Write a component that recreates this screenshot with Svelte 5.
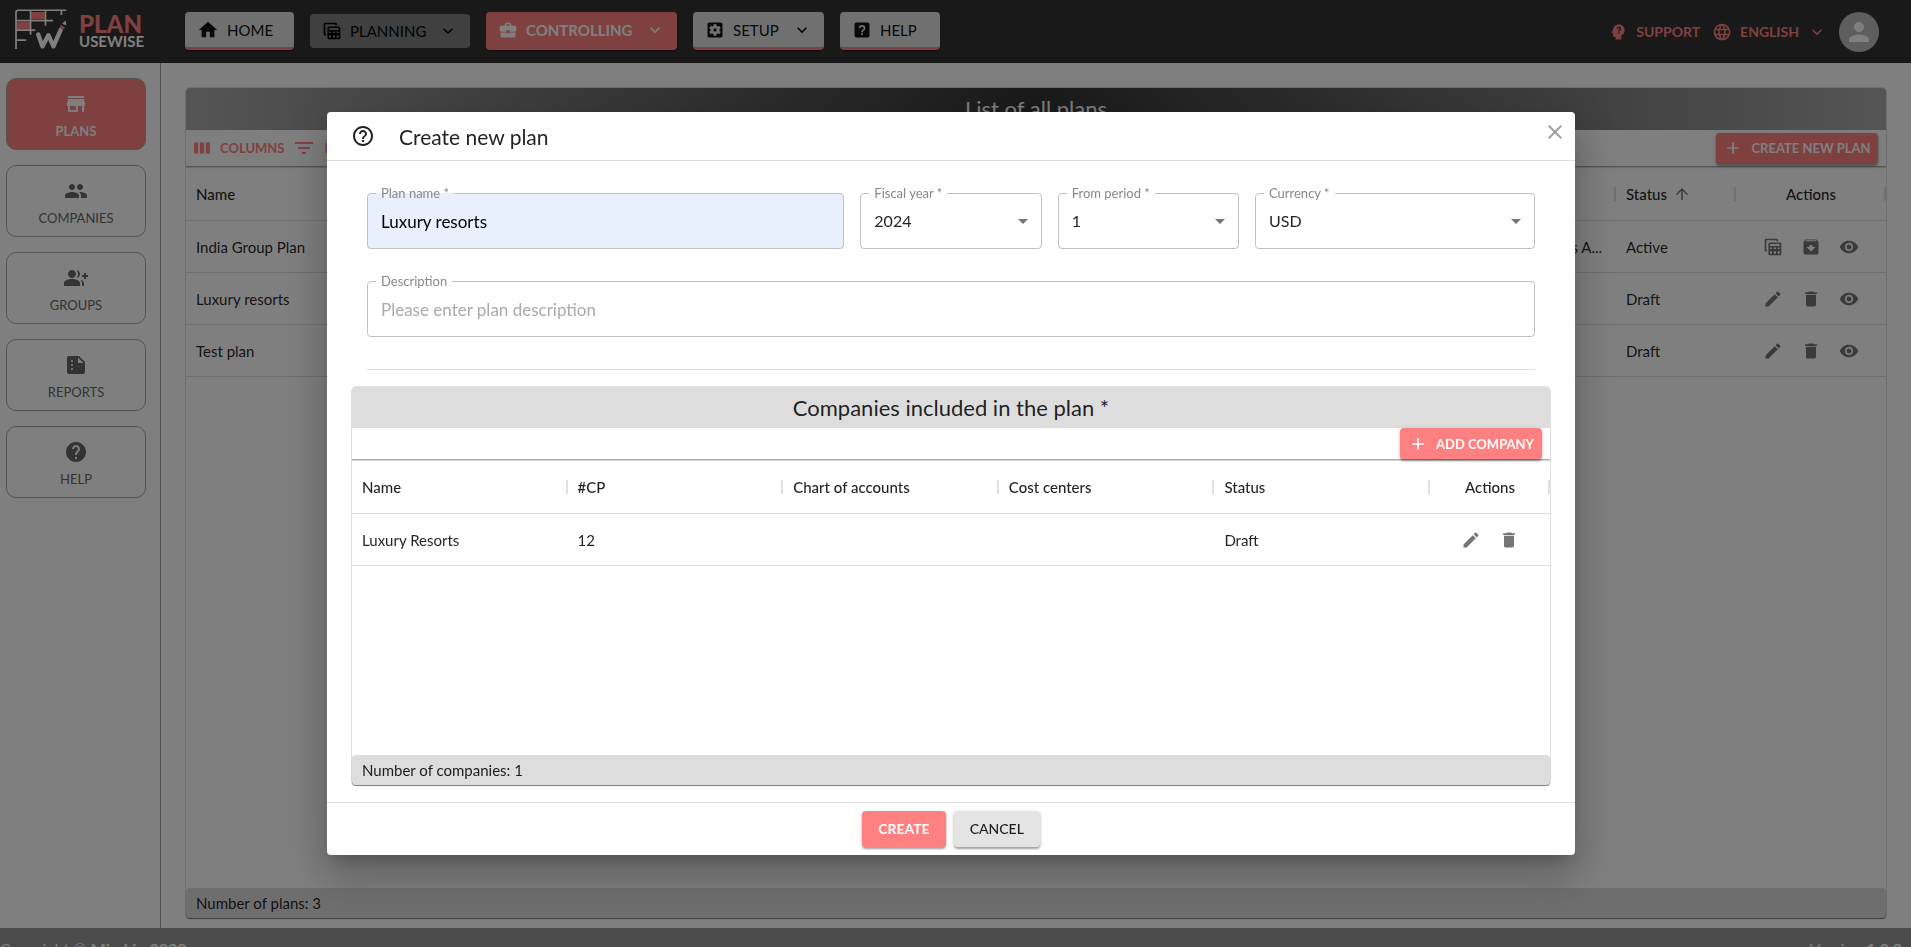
<script>
  const icons = {
    home: 'M10 20v-6h4v6h5v-8h3L12 3 2 12h3v8z',
    chevron: 'M7.41 8.58 12 13.17l4.59-4.59L18 10l-6 6-6-6z',
    tables: 'M2 3.5C2 2.7 2.7 2 3.500 2H16.500c.8 0 1.500.7 1.500 1.500V5h-2V4H4v11.500h1v2H3.500C2.700 17.500 2 16.800 2 16zM8 6.500h12.500c.8 0 1.500.7 1.500 1.500v12.500c0 .8-.7 1.500-1.500 1.500H8c-.8 0-1.500-.7-1.500-1.500V8c0-.8.7-1.500 1.500-1.500zM8.500 8.500v2.200H20V8.500zM8.500 12.500v2h2.300v-2zM13 12.500v2h2.500v-2zM17.700 12.500v2H20v-2zM8.500 17v3h2.300v-3zM13 17v3h2.500v-3zM17.700 17v3H20v-3z',
    briefcase: 'M10 16v-1H3.010L3 19c0 1.110.89 2 2 2h14c1.110 0 2-.89 2-2v-4h-7v1h-4zm10-9h-4.010V5l-2-2h-4l-2 2v2H4c-1.100 0-2 .9-2 2v3c0 1.110.89 2 2 2h6v-2h4v2h6c1.100 0 2-.9 2-2V9c0-1.100-.9-2-2-2zm-6 0h-4V5h4v2z',
    settings: 'M12 10c-1.100 0-2 .9-2 2s.9 2 2 2 2-.9 2-2-.9-2-2-2zm7-7H5c-1.110 0-2 .9-2 2v14c0 1.100.89 2 2 2h14c1.110 0 2-.9 2-2V5c0-1.100-.89-2-2-2zm-1.750 9c0 .23-.02.46-.05.68l1.480 1.160c.13.11.17.3.08.45l-1.400 2.420c-.09.15-.27.21-.43.15l-1.740-.7c-.36.28-.76.51-1.180.69l-.26 1.850c-.03.17-.18.3-.35.3h-2.800c-.17 0-.32-.13-.35-.29l-.26-1.850c-.43-.18-.82-.41-1.180-.69l-1.740.7c-.16.06-.34 0-.43-.15l-1.400-2.420c-.09-.15-.05-.34.08-.45l1.480-1.160c-.03-.23-.05-.46-.05-.69 0-.23.02-.46.05-.68l-1.480-1.160c-.13-.11-.17-.3-.08-.45l1.400-2.420c.09-.15.27-.21.43-.15l1.740.7c.36-.28.76-.51 1.180-.69l.26-1.850c.03-.17.18-.3.35-.3h2.800c.17 0 .32.13.35.29l.26 1.850c.43.18.82.41 1.180.69l1.740-.7c.16-.06.34 0 .43.15l1.400 2.420c.09.15.05.34-.08.45l-1.480 1.160c.03.23.05.46.05.69z',
    helpBox: 'M11 18h2v-2h-2zM12 6a4 4 0 0 0-4 4h2a2 2 0 0 1 4 0c0 2-3 1.750-3 5h2c0-2.250 3-2.500 3-5a4 4 0 0 0-4-4M5 3h14a2 2 0 0 1 2 2v14a2 2 0 0 1-2 2H5a2 2 0 0 1-2-2V5a2 2 0 0 1 2-2z',
    store: 'M20 4H4v2h16V4zm1 10v-2l-1-5H4l-1 5v2h1v6h10v-6h4v6h2v-6h1zm-9 4H6v-4h6v4z',
    people: 'M16 11c1.660 0 2.990-1.340 2.990-3S17.660 5 16 5c-1.660 0-3 1.340-3 3s1.340 3 3 3zm-8 0c1.660 0 2.990-1.340 2.990-3S9.660 5 8 5C6.340 5 5 6.340 5 8s1.340 3 3 3zm0 2c-2.330 0-7 1.170-7 3.500V19h14v-2.500c0-2.330-4.670-3.500-7-3.500zm8 0c-.29 0-.62.02-.97.05 1.160.84 1.970 1.970 1.970 3.450V19h6v-2.500c0-2.330-4.670-3.500-7-3.500z',
    groupAdd: 'M22 9V7h-2v2h-2v2h2v2h2v-2h2V9zM8 12c2.210 0 4-1.790 4-4s-1.790-4-4-4-4 1.790-4 4 1.790 4 4 4zm0 1c-2.670 0-8 1.340-8 4v3h16v-3c0-2.660-5.330-4-8-4zM12.510 4.050C13.430 5.110 14 6.490 14 8s-.57 2.890-1.490 3.950C14.470 11.700 16 10.040 16 8s-1.530-3.700-3.490-3.950zM16.530 13.830C17.420 14.660 18 15.700 18 17v3h2v-3c0-1.450-1.590-2.510-3.470-3.170z',
    report: 'M15 3H5c-1.100 0-2 .9-2 2v14c0 1.100.9 2 2 2h14c1.100 0 2-.9 2-2V9zM8 17a1 1 0 0 1 0-2 1 1 0 0 1 0 2zm0-4a1 1 0 0 1 0-2 1 1 0 0 1 0 2zm0-4a1 1 0 0 1 0-2 1 1 0 0 1 0 2zm6 1V4.500l5.500 5.500z',
    help: 'M12 2C6.480 2 2 6.480 2 12s4.480 10 10 10 10-4.480 10-10S17.520 2 12 2zm1 17h-2v-2h2v2zm2.070-7.750l-.9.92C13.450 12.900 13 13.500 13 15h-2v-.5c0-1.100.45-2.100 1.170-2.830l1.240-1.260c.37-.36.59-.86.59-1.410 0-1.100-.9-2-2-2s-2 .9-2 2H8c0-2.210 1.790-4 4-4s4 1.790 4 4c0 .88-.36 1.680-.93 2.250z',
    helpOutline: 'M11 18h2v-2h-2v2zm1-16C6.480 2 2 6.480 2 12s4.480 10 10 10 10-4.480 10-10S17.520 2 12 2zm0 18c-4.410 0-8-3.590-8-8s3.590-8 8-8 8 3.590 8 8-3.590 8-8 8zm0-14c-2.210 0-4 1.790-4 4h2c0-1.100.9-2 2-2s2 .9 2 2c0 2-3 1.750-3 5h2c0-2.250 3-2.500 3-5 0-2.210-1.790-4-4-4z',
    head: 'M13 3C9.230 3 6.190 5.950 6 9.660l-1.920 2.530c-.24.31 0 .81.42.81H6v3c0 1.110.89 2 2 2h1v3h7v-4.690c2.370-1.120 4-3.510 4-6.310 0-3.860-3.120-7-7-7zm.8 11h-1.600v-1.600h1.600zm0-2.600h-1.600c0-2.400 1.700-2.300 1.700-3.500 0-1.200-1.800-1.200-1.900.1h-1.600c.2-3.200 5.200-3.100 5.200 0 0 1.700-1.800 1.800-1.800 3.400z',
    globe: 'M11.990 2C6.470 2 2 6.480 2 12s4.470 10 9.990 10C17.520 22 22 17.520 22 12S17.520 2 11.990 2zm6.930 6h-2.950c-.32-1.250-.78-2.450-1.380-3.560 1.840.63 3.370 1.910 4.330 3.560zM12 4.040c.83 1.200 1.480 2.530 1.910 3.960h-3.820c.43-1.430 1.080-2.760 1.910-3.960zM4.260 14C4.100 13.360 4 12.690 4 12s.1-1.360.26-2h3.380c-.08.66-.14 1.320-.14 2s.06 1.340.14 2H4.260zm.82 2h2.950c.32 1.250.78 2.450 1.380 3.560-1.840-.63-3.370-1.900-4.330-3.560zm2.950-8H5.080c.96-1.660 2.490-2.930 4.330-3.560C8.810 5.550 8.350 6.750 8.030 8zM12 19.960c-.83-1.200-1.480-2.530-1.910-3.960h3.820c-.43 1.430-1.080 2.760-1.910 3.960zM14.340 14H9.660c-.09-.66-.16-1.320-.16-2s.07-1.350.16-2h4.680c.09.65.16 1.320.16 2s-.07 1.340-.16 2zm.25 5.560c.6-1.110 1.060-2.310 1.380-3.560h2.950c-.96 1.650-2.490 2.930-4.330 3.560zM16.360 14c.08-.66.14-1.320.14-2s-.06-1.340-.14-2h3.380c.16.64.26 1.310.26 2s-.1 1.360-.26 2h-3.380z',
    person: 'M12 12c2.210 0 4-1.790 4-4s-1.790-4-4-4-4 1.790-4 4 1.790 4 4 4zm0 2c-2.670 0-8 1.340-8 4v2h16v-2c0-2.660-5.330-4-8-4z',
    columns: 'M2.500 5.500h5v13h-5zM9.500 5.500h5v13h-5zM16.500 5.500h5v13h-5z',
    filter: 'M10 18h4v-2h-4v2zM3 6v2h18V6H3zm3 7h12v-2H6v2z',
    plus: 'M19 13h-6v6h-2v-6H5v-2h6V5h2v6h6v2z',
    arrowUp: 'm4 12 1.410 1.410L11 7.830V20h2V7.830l5.580 5.590L20 12l-8-8-8 8z',
    edit: 'M3 17.250V21h3.750L17.810 9.940l-3.750-3.750L3 17.250zM20.710 7.040c.39-.39.39-1.020 0-1.410l-2.340-2.340c-.39-.39-1.020-.39-1.410 0l-1.830 1.830 3.750 3.750 1.830-1.830z',
    trash: 'M6 19c0 1.100.9 2 2 2h8c1.100 0 2-.9 2-2V7H6v12zM19 4h-3.500l-1-1h-5l-1 1H5v2h14V4z',
    eye: 'M12 4.500C7 4.500 2.730 7.610 1 12c1.730 4.390 6 7.500 11 7.500s9.270-3.110 11-7.500c-1.730-4.390-6-7.500-11-7.500zM12 17c-2.760 0-5-2.240-5-5s2.240-5 5-5 5 2.240 5 5-2.240 5-5 5zm0-8c-1.660 0-3 1.340-3 3s1.340 3 3 3 3-1.340 3-3-1.340-3-3-3z',
    archive: 'M20.540 5.230l-1.390-1.680C18.880 3.210 18.470 3 18 3H6c-.47 0-.88.21-1.160.55L3.460 5.230C3.170 5.570 3 6.020 3 6.500V19c0 1.100.9 2 2 2h14c1.100 0 2-.9 2-2V6.500c0-.48-.17-.93-.46-1.270zM12 17.500L6.500 12H10v-2h4v2h3.500L12 17.500zM5.120 5l.81-1h12l.94 1H5.120z',
    close: 'M19 6.410 17.590 5 12 10.590 6.410 5 5 6.410 10.590 12 5 17.590 6.410 19 12 13.410 17.590 19 19 17.590 13.410 12z',
    caret: 'M7 10l5 5 5-5z'
  };

  const nav = [
    { label: 'HOME', icon: 'home', kind: 'light', width: 109 },
    { label: 'PLANNING', icon: 'tables', kind: 'muted', width: 160, menu: true },
    { label: 'CONTROLLING', icon: 'briefcase', kind: 'pink', width: 191, menu: true },
    { label: 'SETUP', icon: 'settings', kind: 'light', width: 131, menu: true },
    { label: 'HELP', icon: 'helpBox', kind: 'light', width: 100 }
  ];

  const side = [
    { label: 'PLANS', icon: 'store', active: true },
    { label: 'COMPANIES', icon: 'people' },
    { label: 'GROUPS', icon: 'groupAdd' },
    { label: 'REPORTS', icon: 'report' },
    { label: 'HELP', icon: 'help' }
  ];

  const plans = [
    { name: 'India Group Plan', more: 's A...', status: 'Active', actions: ['tables', 'archive', 'eye'] },
    { name: 'Luxury resorts', more: '', status: 'Draft', actions: ['edit', 'trash', 'eye'] },
    { name: 'Test plan', more: '', status: 'Draft', actions: ['edit', 'trash', 'eye'] }
  ];

  const actionNames = { tables: 'Open tables', archive: 'Archive', eye: 'View', edit: 'Edit', trash: 'Delete' };

  let planName = $state('Luxury resorts');
  let description = $state('');
</script>

{#snippet icon(name, size)}
  <svg class="icon" viewBox="0 0 24 24" width={size} height={size} aria-hidden="true">
    <path fill-rule={name === 'tables' ? 'evenodd' : 'nonzero'} d={icons[name]} />
  </svg>
{/snippet}

<div class="page">
  <header class="topbar">
    <a class="logo" href="#home" aria-label="Plan Usewise">
      <svg viewBox="0 0 160 122" width="53" height="41" aria-hidden="true">
        <path d="M49 8h41v22H49zM5 38h41v22H5z" fill="#ff8080" />
        <path d="M3 120V10Q3 3 10 3H155M47 3V77M92 3V50M140 3v14M3 34h112M3 63h58M3 93h31" fill="none" stroke="#fff" stroke-width="5" />
        <path d="M70 76 83 112 101 78 116 112 138 62" fill="none" stroke="#fff" stroke-width="13" stroke-linecap="round" stroke-linejoin="round" />
        <path d="M138 47l13 8-8 8-7-7z" fill="#ff8080" />
        <path d="M142 44l11-10 2 15z" fill="#fff" />
      </svg>
      <span class="wordmark"><b>PLAN</b><span>USEWISE</span></span>
    </a>
    <nav>
      {#each nav as item}
        <button class="nav {item.kind}" style="width:{item.width}px">
          {@render icon(item.icon, item.icon === 'home' ? 22 : 20)}
          <span>{item.label}</span>
          {#if item.menu}<i>{@render icon('chevron', 20)}</i>{/if}
        </button>
      {/each}
    </nav>
    <div class="account">
      <a href="#support">{@render icon('head', 20)}<span>SUPPORT</span></a>
      <button class="lang">{@render icon('globe', 20)}<span>ENGLISH</span>{@render icon('chevron', 20)}</button>
      <button class="avatar" aria-label="Account">{@render icon('person', 30)}</button>
    </div>
  </header>

  <div class="middle">
    <aside>
      {#each side as item}
        <button class="tile" class:active={item.active}>
          {@render icon(item.icon, 24)}
          <span>{item.label}</span>
        </button>
      {/each}
    </aside>

    <main>
      <section class="card">
        <h1 class="band">List of all plans</h1>
        <div class="tools">
          <button class="text">{@render icon('columns', 20)}<span>COLUMNS</span></button>
          <button class="text">{@render icon('filter', 24)}<span>FILTERS</span></button>
          <button class="solid create">{@render icon('plus', 20)}<span>CREATE NEW PLAN</span></button>
        </div>
        <div class="data">
          <table>
            <colgroup><col /><col /><col class="c120" /><col class="c150" /></colgroup>
            <thead>
              <tr>
                <th>Name</th>
                <th></th>
                <th><span class="sort">Status {@render icon('arrowUp', 18)}</span></th>
                <th class="center">Actions</th>
              </tr>
            </thead>
            <tbody>
              {#each plans as plan}
                <tr>
                  <td>{plan.name}</td>
                  <td class="right">{plan.more}</td>
                  <td>{plan.status}</td>
                  <td>
                    <div class="actions">
                      {#each plan.actions as a}
                        <button aria-label={actionNames[a]}>{@render icon(a, 20)}</button>
                      {/each}
                    </div>
                  </td>
                </tr>
              {/each}
            </tbody>
          </table>
        </div>
        <div class="sum">Number of plans: 3</div>
      </section>
    </main>
  </div>

  <footer class="bottom">
    <span>Copyright © <b>Mirakio 2023</b></span>
    <span>Version <b>1.0.2</b></span>
  </footer>
</div>

<div class="backdrop">
  <div class="modal" role="dialog" aria-modal="true" aria-labelledby="dialog-title">
    <div class="modal-head">
      {@render icon('helpOutline', 24)}
      <h2 id="dialog-title">Create new plan</h2>
      <button class="close" aria-label="Close">{@render icon('close', 24)}</button>
    </div>

    <div class="modal-body">
      <div class="form">
        <fieldset class="field w5 filled">
          <legend><label for="plan-name">Plan name *</label></legend>
          <input id="plan-name" type="text" bind:value={planName} />
        </fieldset>
        <fieldset class="field w2">
          <legend><label for="year">Fiscal year *</label></legend>
          <select id="year"><option>2024</option></select>
          <span class="caret">{@render icon('caret', 24)}</span>
        </fieldset>
        <fieldset class="field w2">
          <legend><label for="period">From period *</label></legend>
          <select id="period"><option>1</option></select>
          <span class="caret">{@render icon('caret', 24)}</span>
        </fieldset>
        <fieldset class="field w3">
          <legend><label for="currency">Currency *</label></legend>
          <select id="currency"><option>USD</option></select>
          <span class="caret">{@render icon('caret', 24)}</span>
        </fieldset>
        <fieldset class="field w12">
          <legend><label for="description">Description</label></legend>
          <input id="description" type="text" placeholder="Please enter plan description" bind:value={description} />
        </fieldset>
      </div>
      <hr />

      <section class="card companies">
        <h3 class="band grey">Companies included in the plan *</h3>
        <div class="tools slim">
          <button class="solid add">{@render icon('plus', 20)}<span>ADD COMPANY</span></button>
        </div>
        <div class="data">
          <table>
            <colgroup><col /><col /><col /><col /><col /><col class="c120" /></colgroup>
            <thead>
              <tr>
                <th>Name</th>
                <th>#CP</th>
                <th>Chart of accounts</th>
                <th>Cost centers</th>
                <th>Status</th>
                <th class="center">Actions</th>
              </tr>
            </thead>
            <tbody>
              <tr>
                <td>Luxury Resorts</td>
                <td>12</td>
                <td></td>
                <td></td>
                <td>Draft</td>
                <td>
                  <div class="actions">
                    <button aria-label="Edit">{@render icon('edit', 20)}</button>
                    <button aria-label="Delete">{@render icon('trash', 20)}</button>
                  </div>
                </td>
              </tr>
            </tbody>
          </table>
        </div>
        <div class="sum">Number of companies: 1</div>
      </section>
    </div>

    <div class="modal-foot">
      <button class="solid big">CREATE</button>
      <button class="solid big cancel">CANCEL</button>
    </div>
  </div>
</div>

<style>
  :global(body) {
    overflow: hidden;
    font-family: Lato, 'Open Sans', sans-serif;
    font-size: 15px;
    line-height: 20px;
    color: rgba(0, 0, 0, 0.87);
  }
  * { box-sizing: border-box; }
  button { font: inherit; color: inherit; background: none; border: 0; padding: 0; cursor: pointer; }
  a { color: inherit; text-decoration: none; }
  h1, h2, h3 { margin: 0; font-weight: 400; }
  .icon { fill: currentColor; flex: none; display: block; }

  .page { display: flex; flex-direction: column; height: 100vh; background: #fff; }
  .topbar { flex: none; display: flex; height: 63px; background: #333; padding-right: 32px; }
  .logo { flex: none; width: 185px; display: flex; gap: 11px; padding: 9px 0 0 15px; }
  .wordmark { display: flex; flex-direction: column; color: #fff; font-weight: 700; font-size: 15px; line-height: 14px; padding-top: 5px; }
  .wordmark b { color: #ff8080; font-weight: 900; font-size: 24px; line-height: 20px; }
  nav { display: flex; gap: 16px; padding-top: 12px; }
  .nav { height: 38px; display: flex; align-items: center; gap: 8px; padding: 0 12px; border-radius: 4px; font-size: 15px; color: #111; box-shadow: 0 2px 2px rgba(0, 0, 0, 0.3); }
  .nav i { margin-left: auto; }
  .light { background: #e0e0e0; border-bottom: 3px solid #ff8080; }
  .muted { background: #808080; height: 34px; margin-top: 2px; box-shadow: none; color: #000; }
  .pink { background: #ff8080; color: #fff; font-weight: 700; padding-bottom: 3px; }
  .account { margin-left: auto; display: flex; align-items: center; gap: 12px; color: #ff8080; font-weight: 700; }
  .account a, .lang { display: flex; align-items: center; gap: 8px; font-size: 14px; }
  .account .avatar { width: 40px; height: 40px; border-radius: 50%; background: #bdbdbd; color: #fff; display: grid; place-items: center; }

  .middle { flex: 1; min-height: 0; display: flex; }
  aside { flex: none; width: 161px; padding: 15px 14px 0 6px; border-right: 1px solid #a0a0a0; display: flex; flex-direction: column; gap: 15px; }
  .tile { height: 72px; border: 1px solid #a8a8a8; border-radius: 10px; color: #666; font-size: 13px; line-height: 18px; display: flex; flex-direction: column; align-items: center; justify-content: center; gap: 6px; padding-top: 4px; }
  .tile.active { background: #ff8080; color: #fff; font-weight: 700; }
  main { flex: 1; min-width: 0; padding: 24px 24px 9px; display: flex; }

  .card { flex: 1; display: flex; flex-direction: column; border: 1px solid #e0e0e0; border-radius: 5px; }
  .band { height: 42px; display: flex; align-items: center; justify-content: center; font-size: 22px; color: #fff; background: radial-gradient(circle, #333, #aaa); border-radius: 4px 4px 0 0; }
  .tools { height: 37px; display: flex; align-items: center; gap: 8px; padding: 0 8px 0 6px; border-bottom: 1px solid #aaa; box-shadow: 0 1px 1px rgba(0, 0, 0, 0.15); }
  .text { display: flex; align-items: center; gap: 8px; color: #ff8080; font-size: 13px; font-weight: 700; }
  .solid { display: flex; align-items: center; justify-content: center; gap: 8px; height: 31px; border-radius: 4px; background: #ff8080; color: #fff; font-size: 13px; font-weight: 700; box-shadow: 0 2px 2px rgba(0, 0, 0, 0.3), 0 1px 4px rgba(0, 0, 0, 0.15); white-space: nowrap; }
  .solid.create, .solid.add { margin-left: auto; }
  .create { width: 162px; }
  .add { width: 142px; }

  .data { flex: 1; }
  table { width: 100%; table-layout: fixed; border-collapse: separate; border-spacing: 0; }
  .c120 { width: 120px; }
  .c150 { width: 150px; }
  th, td { padding: 0 10px; text-align: left; border-bottom: 1px solid #e0e0e0; }
  th { height: 54px; font-weight: 500; background: linear-gradient(#e0e0e0, #e0e0e0) right center / 2px 14px no-repeat; }
  td { height: 52px; }
  th.center { text-align: center; }
  td.right { text-align: right; padding-right: 14px; }
  .sort { display: flex; align-items: center; gap: 6px; }
  .sort .icon, .sort :global(.icon) { fill: #757575; }
  .actions { display: flex; justify-content: center; gap: 18px; color: #757575; }
  .sum { height: 30px; padding: 0 10px; display: flex; align-items: center; background: #ddd; border-radius: 4px; box-shadow: 0 1px 1px rgba(0, 0, 0, 0.45); }

  .bottom { flex: none; height: 19px; overflow: hidden; background: #999; color: #fff; display: flex; justify-content: space-between; padding: 11px 9px 0 0; font-size: 16px; }

  .backdrop { position: fixed; inset: 0; background: rgba(0, 0, 0, 0.5); display: grid; place-items: center; padding: 20px 9px 0 0; }
  .modal { width: 100%; max-width: 1248px; background: #fff; border-radius: 4px; box-shadow: 0 11px 15px -7px rgba(0, 0, 0, 0.2), 0 24px 38px 3px rgba(0, 0, 0, 0.14), 0 9px 46px 8px rgba(0, 0, 0, 0.12); }
  .modal-head { height: 49px; display: flex; align-items: center; padding: 0 8px 0 24px; gap: 24px; border-bottom: 1px solid #e0e0e0; }
  .modal-head h2 { font-size: 21px; line-height: 28px; padding-top: 2px; }
  .close { margin: 0 0 9px auto; color: #9e9e9e; }
  .modal-body { padding: 25px 24px 16px; }
  .form { display: grid; grid-template-columns: repeat(12, 1fr); gap: 25px 16px; padding: 0 16px; }
  .w2 { grid-column: span 2; }
  .w3 { grid-column: span 3; }
  .w5 { grid-column: span 5; }
  .w12 { grid-column: span 12; }
  .field { position: relative; min-width: 0; margin: 0; padding: 0 8px; border: 1px solid #c0c0c0; border-radius: 4px; height: 63px; }
  .field legend { padding: 0 5px; font-size: 13px; line-height: 14px; height: 14px; color: #888; }
  .field input, .field select { display: block; width: 100%; height: 42px; border: 0; padding: 0 5px; background: none; font: inherit; font-size: 16px; color: inherit; outline: 0; appearance: none; }
  .field input { font-size: 17px; }
  .field input::placeholder { color: #aaa; opacity: 1; }
  .filled { background: #e8f0fe; }
  .filled input { color: #000; }
  .caret { position: absolute; right: 6px; top: 9px; color: #757575; pointer-events: none; }
  hr { border: 0; border-top: 1px solid #e0e0e0; margin: 32px 16px 16px; }
  .companies .data { min-height: 295px; }
  .grey { height: 41px; background: #ddd; color: rgba(0, 0, 0, 0.87); }
  .slim { height: 32px; }
  .modal-foot { height: 53px; border-top: 1px solid #e0e0e0; display: flex; align-items: center; justify-content: center; gap: 8px; }
  .solid.big { height: 36px; padding: 0 16px; font-size: 14px; }
  .solid.cancel { background: #e4e4e4; color: rgba(0, 0, 0, 0.87); font-weight: 500; }
</style>
